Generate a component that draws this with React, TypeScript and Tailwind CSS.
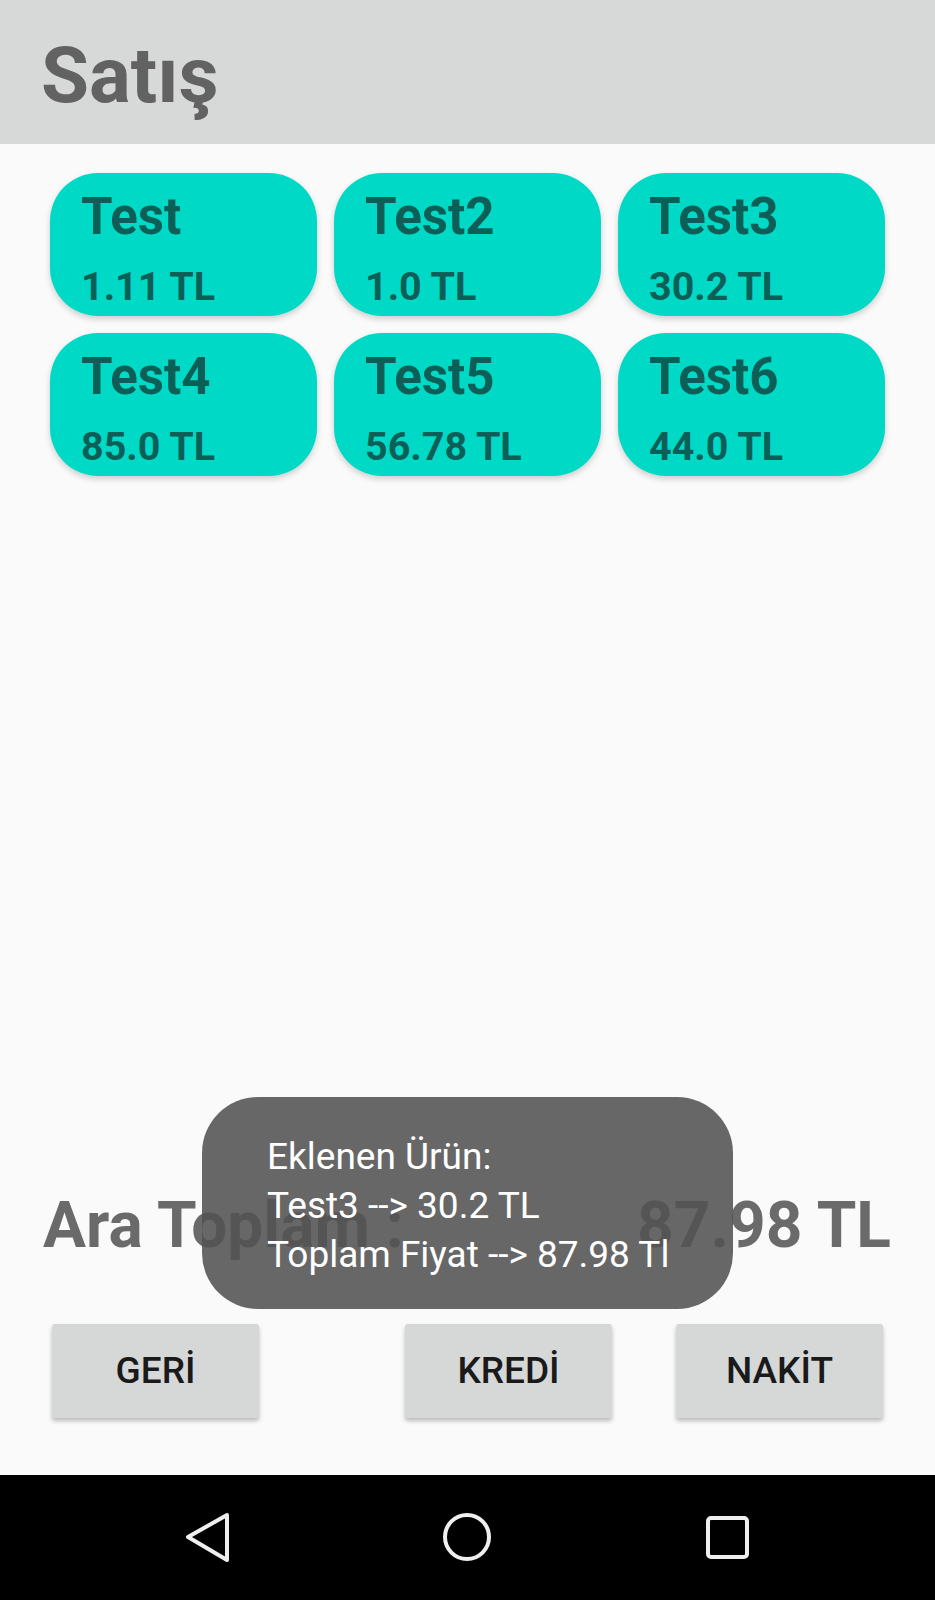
import React from "react";

const products = [
  { name: "Test", price: "1.11 TL" },
  { name: "Test2", price: "1.0 TL" },
  { name: "Test3", price: "30.2 TL" },
  { name: "Test4", price: "85.0 TL" },
  { name: "Test5", price: "56.78 TL" },
  { name: "Test6", price: "44.0 TL" },
];

export default function App() {
  return (
    <div
      className="relative flex flex-col w-[935px] h-[1600px] bg-[#fafafa] overflow-hidden"
      style={{ fontFamily: "Roboto, 'Noto Sans', sans-serif" }}
    >
      {/* Header */}
      <div className="h-[144px] shrink-0 bg-[#d7d8d8] pl-[41px] pt-[37px]">
        <div className="text-[78px] leading-none font-bold text-[#626262]">Satış</div>
      </div>

      {/* Main */}
      <div className="flex-1 flex flex-col">
        <div className="grid grid-cols-3 gap-x-[17px] gap-y-[17px] px-[50px] pt-[29px]">
          {products.map((p) => (
            <div
              key={p.name}
              className="h-[143px] rounded-[48px] bg-[#00d9c6] pl-[31px] pt-[18px] shadow-[0_3px_6px_rgba(0,0,0,0.18)]"
            >
              <div className="text-[51px] leading-none font-bold text-[#0b5f57]">{p.name}</div>
              <div className="mt-[25px] text-[39.5px] leading-none font-bold text-[#0b5f57]">{p.price}</div>
            </div>
          ))}
        </div>
      </div>

      {/* Ara Toplam */}
      <div className="flex justify-between pl-[43px] pr-[44px] text-[64px] leading-[72px] font-bold text-[#6a6a6a]">
        <span>Ara Toplam :</span>
        <span>87.98 TL</span>
      </div>

      {/* Buttons */}
      <div className="flex pl-[52px] mt-[62px] mb-[57px]">
        <button className="w-[207px] h-[94px] rounded-[3px] bg-[#d6d7d7] text-[37px] font-medium text-[#1a1a1a] shadow-[0_3px_4px_rgba(0,0,0,0.25)]">
          GERİ
        </button>
        <button className="ml-[146px] w-[207px] h-[94px] rounded-[3px] bg-[#d6d7d7] text-[37px] font-medium text-[#1a1a1a] shadow-[0_3px_4px_rgba(0,0,0,0.25)]">
          KREDİ
        </button>
        <button className="ml-[64px] w-[207px] h-[94px] rounded-[3px] bg-[#d6d7d7] text-[37px] font-medium text-[#1a1a1a] shadow-[0_3px_4px_rgba(0,0,0,0.25)]">
          NAKİT
        </button>
      </div>

      {/* Nav bar */}
      <div className="h-[125px] shrink-0 bg-black flex items-start">
        <svg width="935" height="125" viewBox="0 0 935 125">
          <path
            d="M227 40 L188 62 L227 85 Z"
            fill="none"
            stroke="#efefef"
            strokeWidth="4"
            strokeLinejoin="round"
          />
          <circle cx="467" cy="62" r="22" fill="none" stroke="#efefef" strokeWidth="4" />
          <rect x="708" y="43" width="39" height="39" rx="3" fill="none" stroke="#efefef" strokeWidth="4" />
        </svg>
      </div>

      {/* Toast */}
      <div className="absolute left-[202px] top-[1097px] w-[531px] h-[212px] rounded-[56px] bg-[rgba(82,82,82,0.88)] pl-[65px] pt-[35px]">
        <div className="text-[37px] leading-[49px] text-white whitespace-nowrap">
          <div>Eklenen Ürün:</div>
          <div>Test3 --&gt; 30.2 TL</div>
          <div>Toplam Fiyat --&gt; 87.98 Tl</div>
        </div>
      </div>
    </div>
  );
}
